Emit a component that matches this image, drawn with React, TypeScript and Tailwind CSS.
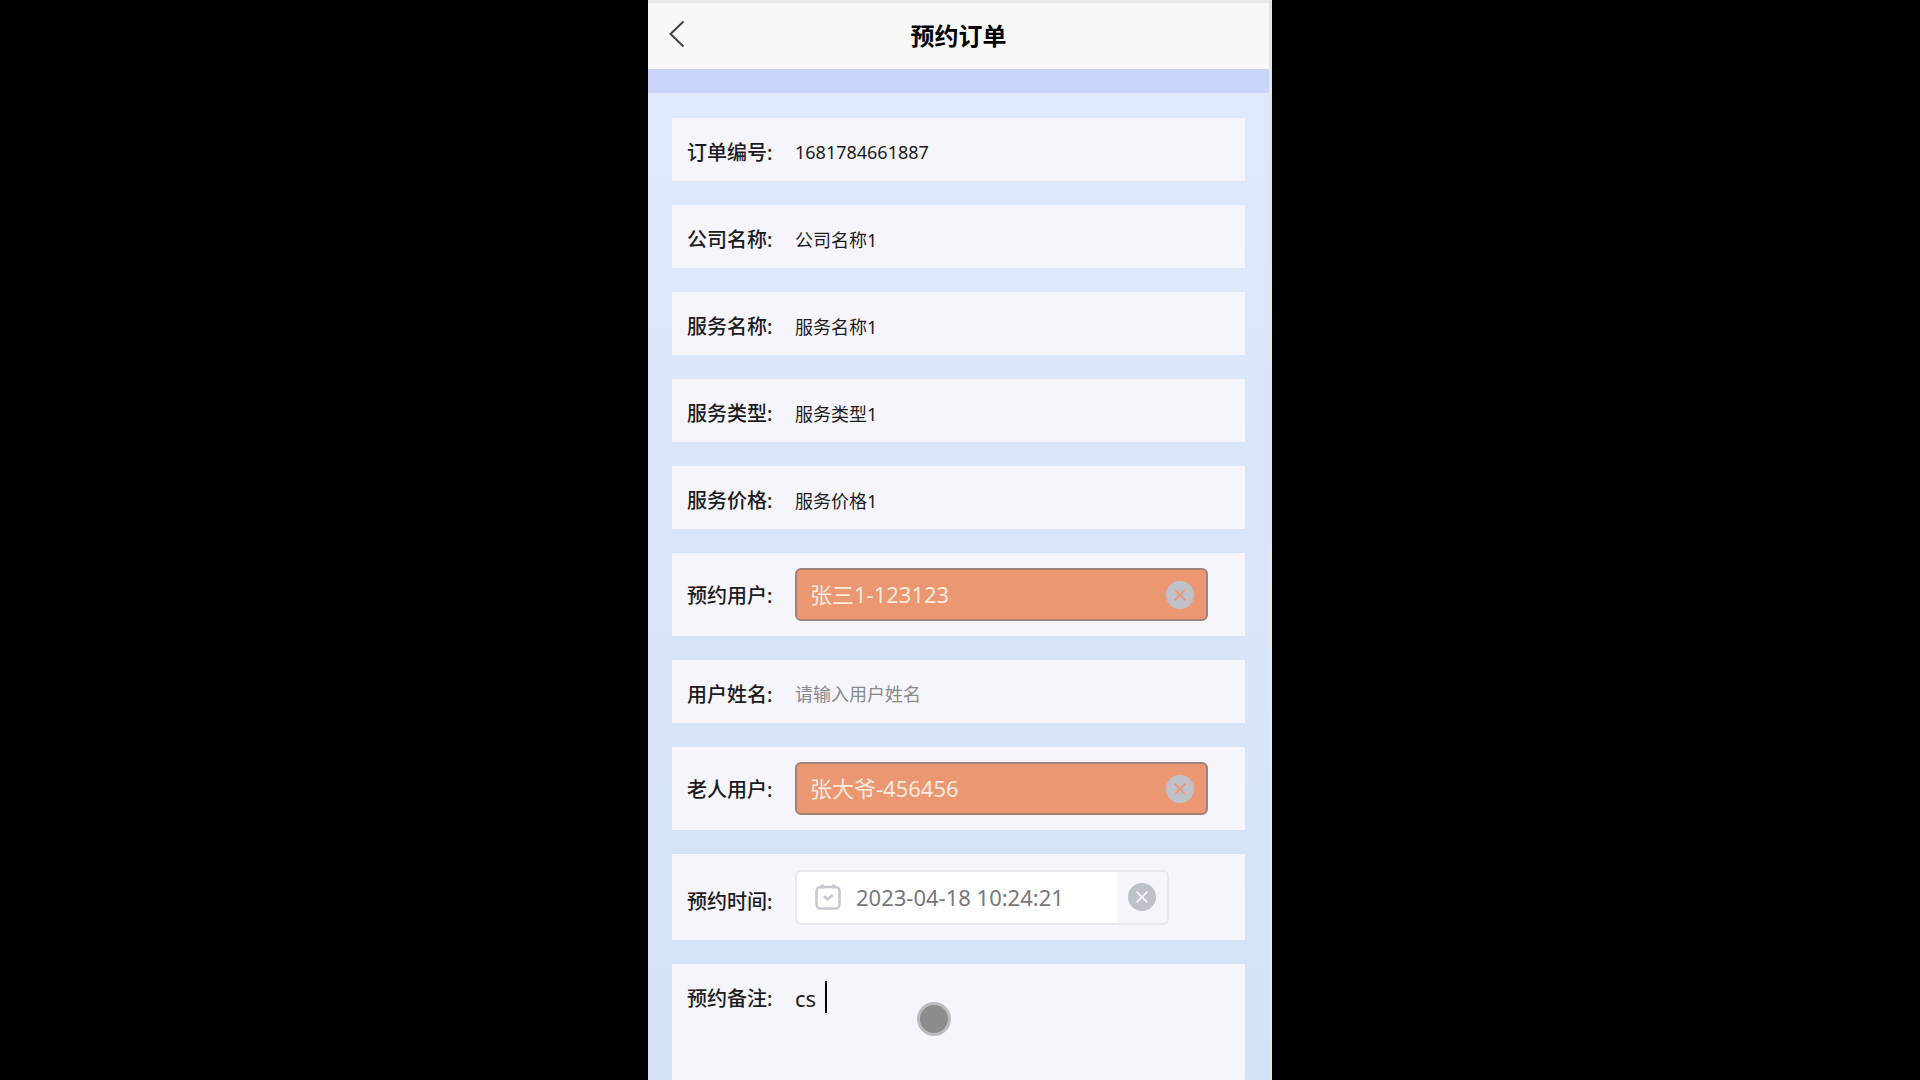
import { useState, type ReactNode } from "react";

const readOnlyFields = [
  { id: "order-no", label: "订单编号:", value: "1681784661887" },
  { id: "company", label: "公司名称:", value: "公司名称1" },
  { id: "service", label: "服务名称:", value: "服务名称1" },
  { id: "type", label: "服务类型:", value: "服务类型1" },
  { id: "price", label: "服务价格:", value: "服务价格1" },
];

function Label({ id, children }: { id: string; children: ReactNode }) {
  return (
    <label htmlFor={id} className="w-[108px] shrink-0 pt-0.5 text-[20px] leading-7 font-medium text-[#1c1c20]">
      {children}
    </label>
  );
}

function CrossCircle() {
  return (
    <svg viewBox="0 0 28 28" className="block size-7">
      <path
        fillRule="evenodd"
        fill="currentColor"
        d="M14 0a14 14 0 1 0 0 28a14 14 0 1 0 0-28zM14 12.700L18.800 7.900L20.100 9.200L15.300 14L20.100 18.800L18.800 20.100L14 15.300L9.200 20.100L7.900 18.800L12.700 14L7.900 9.200L9.200 7.900z"
      />
    </svg>
  );
}

function TextRow({ id, label, value, placeholder }: { id: string; label: string; value?: string; placeholder?: string }) {
  const [text, setText] = useState(value ?? "");
  return (
    <div className="flex h-[63px] items-center bg-[#f6f5fb] px-[15px] pt-1">
      <Label id={id}>{label}</Label>
      <input
        id={id}
        value={text}
        placeholder={placeholder}
        onChange={(e) => setText(e.target.value)}
        className="h-7 min-w-0 flex-1 bg-transparent text-[18px] text-[#1c1c20] outline-none placeholder:text-[#8a8a8c]"
      />
    </div>
  );
}

function UserRow({ id, label, value }: { id: string; label: string; value: string }) {
  const [text, setText] = useState(value);
  return (
    <div className="flex items-center bg-[#f6f5fb] p-[15px]">
      <Label id={id}>{label}</Label>
      <div className="flex h-[53px] max-w-[413px] flex-1 items-center rounded-md border-2 border-[#a38377] bg-[#eb9771] px-3">
        <input
          id={id}
          value={text}
          onChange={(e) => setText(e.target.value)}
          className="h-8 min-w-0 flex-1 bg-transparent pl-px text-[22px] text-[#fdeadf] outline-none"
        />
        <button type="button" aria-label="清除" onClick={() => setText("")} className="text-[#bfc3c9]">
          <CrossCircle />
        </button>
      </div>
    </div>
  );
}

export default function App() {
  const [date, setDate] = useState("2023-04-18 10:24:21");
  const [note, setNote] = useState("cs ");
  return (
    <div className="min-h-screen bg-black font-['Noto_Sans','Noto_Sans_CJK_SC',sans-serif]">
      <main className="relative mx-auto flex min-h-screen max-w-[624px] flex-col border-r-[3px] border-[#e2e6ec] bg-linear-to-b from-[#dfeafb] to-[#d3e2f7]">
        <header className="grid h-[69px] grid-cols-[60px_1fr_60px] items-center border-t-[3px] border-[#e8e8e8] bg-[#f8f8f8]">
          <button type="button" aria-label="返回" className="flex h-full items-center pl-5">
            <svg viewBox="0 0 18 28" className="mb-1 h-7 w-[18px] fill-none stroke-[#444] stroke-2">
              <path d="M15.500 1.500L2.500 14L15.500 26.500" />
            </svg>
          </button>
          <h1 className="text-center text-2xl font-bold text-black">预约订单</h1>
        </header>
        <div className="h-6 bg-[#cad5fa]" />
        <form className="flex flex-1 flex-col gap-6 px-6 pt-[25px]">
          {readOnlyFields.map((f) => (
            <TextRow key={f.id} {...f} />
          ))}
          <UserRow id="user" label="预约用户:" value="张三1-123123" />
          <TextRow id="user-name" label="用户姓名:" placeholder="请输入用户姓名" />
          <UserRow id="elder" label="老人用户:" value="张大爷-456456" />
          <div className="flex h-[86px] items-center bg-[#f6f5fb] px-[15px]">
            <div className="flex pt-2">
              <Label id="date">预约时间:</Label>
            </div>
            <div className="flex h-[55px] max-w-[374px] flex-1 items-stretch overflow-hidden rounded-md border-2 border-[#e9e9ed]">
              <div className="flex min-w-0 flex-1 items-center bg-white pl-[18px]">
                <svg viewBox="0 0 26 26" className="size-[26px] shrink-0 fill-none stroke-[#c6c8cf] stroke-2">
                  <rect x="1.500" y="3" width="23" height="21.500" rx="4" strokeWidth="2.500" />
                  <path d="M7.500 0.500V4.500M18.500 0.500V4.500" strokeWidth="3" />
                  <path d="M9 12L12.500 15.500L17.500 11" strokeWidth="2.500" />
                </svg>
                <input
                  id="date"
                  value={date}
                  onChange={(e) => setDate(e.target.value)}
                  className="h-8 min-w-0 flex-1 bg-transparent pl-[15px] text-[22px] text-[#77777a] outline-none"
                />
              </div>
              <button
                type="button"
                aria-label="清除"
                onClick={() => setDate("")}
                className="flex w-[50px] items-center justify-center text-[#bec1c8]"
              >
                <CrossCircle />
              </button>
            </div>
          </div>
          <div className="flex flex-1 bg-[#f6f5fb] px-[15px] pt-[19px]">
            <Label id="note">预约备注:</Label>
            <div className="relative flex flex-1">
              <textarea
                id="note"
                value={note}
                onChange={(e) => setNote(e.target.value)}
                className="flex-1 resize-none bg-transparent text-[22px] leading-[30px] text-[#1c1c20] outline-none"
              />
              <span className="absolute -top-0.5 left-[30px] h-8 w-0.5 bg-black" />
            </div>
          </div>
        </form>
        <span className="absolute top-[1002px] left-[269px] size-[34px] rounded-full border-[3px] border-[#bcbcbf] bg-[#8d8d8f]" />
      </main>
    </div>
  );
}
